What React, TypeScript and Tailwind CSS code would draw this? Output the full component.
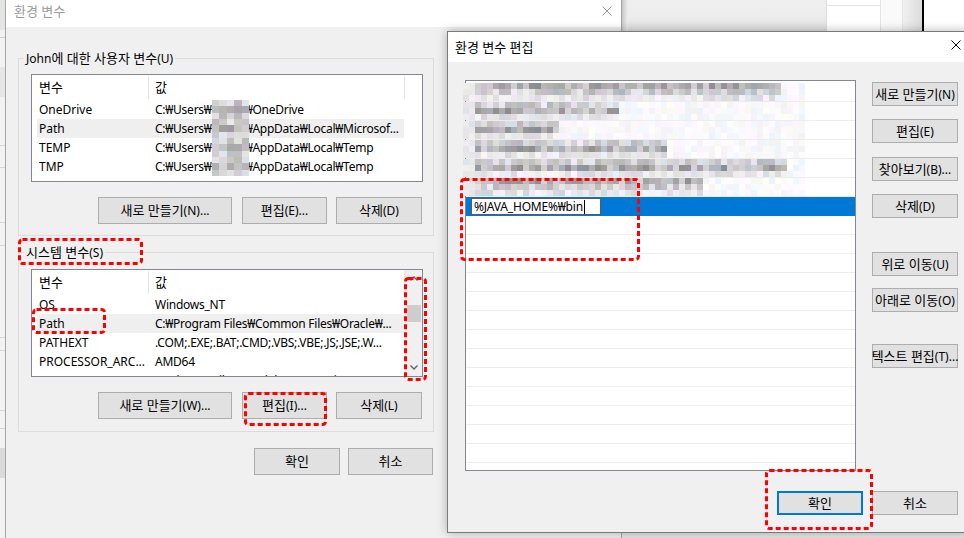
import React from "react";

function makeRng(seed: number) {
  let s = ((seed + 7) * 2654435761) >>> 0 || 1;
  return () => {
    s ^= s << 13;
    s >>>= 0;
    s ^= s >>> 17;
    s ^= s << 5;
    s >>>= 0;
    return s / 4294967296;
  };
}

const TINTS: [number, number, number][] = [
  [0, 0, 0],
  [0, 0, 0],
  [8, 0, 10],
  [-6, 0, 8],
  [5, 3, -3],
  [3, -3, 5],
];

function grayColor(r: () => number, lo: number, hi: number) {
  const v = Math.round(lo + r() * (hi - lo));
  const t = TINTS[Math.floor(r() * TINTS.length)];
  const c = (n: number) => Math.max(0, Math.min(255, v + n));
  return `rgb(${c(t[0])},${c(t[1])},${c(t[2])})`;
}

const HANGUL = /([\uAC00-\uD7A3\u3131-\u318E]+(?:\s+[\uAC00-\uD7A3\u3131-\u318E]+)*)/;

function Ko({ text }: { text: string }) {
  const parts = text.split(HANGUL);
  return (
    <>
      {parts.map((p, i) =>
        i % 2 === 1 ? (
          <span key={i} className="text-[13px]">
            {p}
          </span>
        ) : (
          <React.Fragment key={i}>{p}</React.Fragment>
        )
      )}
    </>
  );
}

function UserMosaic({ seed }: { seed: number }) {
  const r = makeRng(seed);
  const cols = [7, 8, 7, 8, 7];
  const rows = [6, 7, 6];
  const rects: React.ReactNode[] = [];
  let y = 0;
  rows.forEach((h, ri) => {
    let x = 0;
    cols.forEach((w, ci) => {
      rects.push(
        <rect
          key={`${ri}-${ci}`}
          x={x}
          y={y}
          width={w}
          height={h}
          fill={grayColor(r, ri === 1 ? 150 : 180, ri === 1 ? 212 : 232)}
        />
      );
      x += w;
    });
    y += h;
  });
  return (
    <svg width={37} height={19} className="inline-block align-top relative z-10" shapeRendering="crispEdges">
      {rects}
    </svg>
  );
}

function EditMosaic({ seed, textEnd, dark }: { seed: number; textEnd: number; dark: number }) {
  const r = makeRng(seed);
  const W = 342;
  const cw = 6;
  const bands = [6, 6, 6];
  const rects: React.ReactNode[] = [];
  let y = 0;
  bands.forEach((h, bi) => {
    for (let i = 0; i * cw < W; i++) {
      const x = i * cw;
      let fill: string;
      if (x < 12) {
        fill = grayColor(r, 225, 240);
      } else if (x < textEnd) {
        if (bi === dark) fill = grayColor(r, 140, 212);
        else if (bi === 2) fill = grayColor(r, 212, 246);
        else fill = grayColor(r, 180, 236);
      } else {
        fill = grayColor(r, 242, 253);
      }
      rects.push(<rect key={`${bi}-${i}`} x={x} y={y} width={cw} height={h} fill={fill} />);
    }
    y += h;
  });
  return (
    <svg width={W} height={18} className="block -ml-[3px]" shapeRendering="crispEdges">
      {rects}
    </svg>
  );
}

function CloseX({ color }: { color: string }) {
  return (
    <svg width="10" height="10" viewBox="0 0 10 10" className="shrink-0">
      <path d="M0.5 0.5L9.5 9.5M9.5 0.5L0.5 9.5" stroke={color} strokeWidth="1" />
    </svg>
  );
}

function DashBox({ className, w, h }: { className: string; w: number; h: number }) {
  return (
    <svg className={`absolute ${className}`} width={w} height={h} viewBox={`0 0 ${w} ${h}`}>
      <rect
        x={1.5}
        y={1.5}
        width={w - 3}
        height={h - 3}
        rx={3}
        fill="none"
        stroke="#ff0000"
        strokeWidth={3}
        strokeDasharray="5 3"
      />
    </svg>
  );
}

function Btn({ label, className = "" }: { label: string; className?: string }) {
  return (
    <div
      className={`flex items-center justify-center bg-[#e1e1e1] border border-[#adadad] whitespace-nowrap leading-[16px] shrink-0 ${className}`}
    >
      <span>
        <Ko text={label} />
      </span>
    </div>
  );
}

function ListHeader() {
  return (
    <div className="h-[25px] shrink-0 flex items-center">
      <div className="w-[117px] h-[23px] flex items-center pl-[7px] border-r border-[#e5e5e5] text-[13px]">변수</div>
      <div className="w-[256px] h-[23px] flex items-center pl-[6px] border-r border-[#e5e5e5] text-[13px]">값</div>
    </div>
  );
}

function VarRow({ name, children, hl = false }: { name: string; children: React.ReactNode; hl?: boolean }) {
  return (
    <div className={`h-[19px] shrink-0 ml-[5px] w-[367px] flex leading-[19px] ${hl ? "bg-[#efefef]" : ""}`}>
      <div className="w-[116px] pl-[2px] whitespace-nowrap overflow-hidden">{name}</div>
      <div className="w-[251px] pl-[2px] whitespace-nowrap overflow-hidden tracking-[-0.25px]">{children}</div>
    </div>
  );
}

function UserPath({ seed, rest }: { seed: number; rest: string }) {
  return (
    <>
      C:₩Users₩
      <UserMosaic seed={seed} />
      <span className="-ml-[4px]">{rest}</span>
    </>
  );
}

function Chevron({ down = false }: { down?: boolean }) {
  return (
    <svg width="8" height="5" viewBox="0 0 8 5">
      <path
        d={down ? "M0.5 0.5L4 4L7.5 0.5" : "M0.5 4.5L4 1L7.5 4.5"}
        stroke="#606060"
        strokeWidth="1.3"
        fill="none"
      />
    </svg>
  );
}

function Group({ label, className, children }: { label: string; className: string; children: React.ReactNode }) {
  return (
    <div className={`relative w-[416px] border border-[#dcdcdc] flex flex-col pl-[12px] shrink-0 ${className}`}>
      <span className="absolute left-[5px] -top-[9px] bg-[#f0f0f0] px-[2px] leading-[16px] whitespace-nowrap">
        <Ko text={label} />
      </span>
      {children}
    </div>
  );
}

function MainDialog() {
  return (
    <div className="absolute left-[5px] top-0 w-[617px] h-[560px] flex flex-col border-x border-[#a5a5a5] bg-[#f0f0f0]">
      <div className="h-[27px] shrink-0 bg-white flex items-center justify-between pl-[8px] pr-[9px]">
        <span className="text-[#9a9a9a] text-[13px] leading-[16px] -mt-[5px]">환경 변수</span>
        <div className="-mt-[5px] flex">
          <CloseX color="#9a9a9a" />
        </div>
      </div>
      <div className="flex flex-col pl-[12px] pt-[31px]">
        <Group label="John에 대한 사용자 변수(U)" className="h-[178px] pt-[15px]">
          <div className="w-[392px] h-[108px] border border-[#828790] bg-white flex flex-col overflow-hidden">
            <ListHeader />
            <VarRow name="OneDrive">
              <UserPath seed={1} rest="₩OneDrive" />
            </VarRow>
            <VarRow name="Path" hl>
              <UserPath seed={2} rest="₩AppData₩Local₩Microsof..." />
            </VarRow>
            <VarRow name="TEMP">
              <UserPath seed={3} rest="₩AppData₩Local₩Temp" />
            </VarRow>
            <VarRow name="TMP">
              <UserPath seed={4} rest="₩AppData₩Local₩Temp" />
            </VarRow>
          </div>
          <div className="flex mt-[15px] ml-[67px] gap-[10px]">
            <Btn label="새로 만들기(N)..." className="w-[134px] h-[27px]" />
            <Btn label="편집(E)..." className="w-[85px] h-[27px]" />
            <Btn label="삭제(D)" className="w-[86px] h-[27px] -ml-[1px]" />
          </div>
        </Group>
        <Group label="시스템 변수(S)" className="h-[180px] pt-[16px] mt-[16px]">
          <div className="w-[392px] h-[108px] border border-[#828790] bg-white flex">
            <div className="w-[373px] flex flex-col overflow-hidden">
              <ListHeader />
              <VarRow name="OS">Windows_NT</VarRow>
              <VarRow name="Path" hl>
                C:₩Program Files₩Common Files₩Oracle₩...
              </VarRow>
              <VarRow name="PATHEXT">.COM;.EXE;.BAT;.CMD;.VBS;.VBE;.JS;.JSE;.W...</VarRow>
              <VarRow name="PROCESSOR_ARC...">AMD64</VarRow>
              <VarRow name="PROCESSOR_IDE...">Intel64 Family 6 Model 158 Stepping 10, ...</VarRow>
            </div>
            <div className="w-[17px] flex flex-col bg-[#f0f0f0] border-l border-[#e8e8e8]">
              <div className="h-[17px] flex items-center justify-center">
                <Chevron />
              </div>
              <div className="flex-1 flex flex-col">
                <div className="mt-[18px] h-[17px] bg-[#cdcdcd] mx-[1px]" />
              </div>
              <div className="h-[17px] flex items-center justify-center">
                <Chevron down />
              </div>
            </div>
          </div>
          <div className="flex mt-[15px] ml-[67px] gap-[10px]">
            <Btn label="새로 만들기(W)..." className="w-[134px] h-[27px]" />
            <Btn label="편집(I)..." className="w-[85px] h-[27px]" />
            <Btn label="삭제(L)" className="w-[86px] h-[27px] -ml-[1px]" />
          </div>
        </Group>
        <div className="flex mt-[16px] ml-[236px] gap-[8px]">
          <Btn label="확인" className="w-[86px] h-[27px]" />
          <Btn label="취소" className="w-[85px] h-[27px]" />
        </div>
      </div>
    </div>
  );
}

const EDIT_ROWS = [
  { end: 317, dark: 0 },
  { end: 155, dark: 1 },
  { end: 95, dark: 1 },
  { end: 204, dark: 1 },
  { end: 324, dark: 1 },
  { end: 240, dark: 0 },
];

function EditDialog() {
  const rows = Array.from({ length: 20 }, (_, i) => i);
  return (
    <div className="absolute left-[447px] top-[31px] w-[522px] h-[502px] flex flex-col border border-[#7a7a7a] bg-[#f0f0f0] shadow-[0_0_10px_rgba(0,0,0,0.28)]">
      <div className="h-[30px] shrink-0 bg-white flex items-center justify-between pl-[7px] pr-[7px]">
        <span className="leading-[16px] text-[13px]">환경 변수 편집</span>
        <div className="-mt-[4px] flex">
          <CloseX color="#000000" />
        </div>
      </div>
      <div className="flex pt-[18px] pl-[17px]">
        <div className="w-[391px] h-[391px] shrink-0 border border-[#828790] bg-white flex flex-col pt-[2px]">
          {rows.map((i) =>
            i < 6 ? (
              <div key={i} className="h-[19px] shrink-0 border-b border-[#ededed]">
                <EditMosaic seed={i * 31 + 5} textEnd={EDIT_ROWS[i].end} dark={EDIT_ROWS[i].dark} />
              </div>
            ) : i === 6 ? (
              <div key={i} className="h-[19px] shrink-0 bg-[#0078d7] flex items-start">
                <div className="ml-[5px] mt-[1px] h-[17px] w-[130px] bg-white border border-[#5a5a5a] flex items-center pl-[2px] leading-[15px] whitespace-nowrap tracking-[-0.2px]">
                  <span>%JAVA_HOME%₩bin</span>
                  <span className="ml-[1px] w-[1px] h-[14px] bg-black" />
                </div>
              </div>
            ) : (
              <div key={i} className="h-[19px] shrink-0 border-b border-[#ededed]" />
            )
          )}
        </div>
        <div className="w-[86px] ml-[16px] pt-[2px] flex flex-col">
          <Btn label="새로 만들기(N)" className="w-[86px] h-[24px]" />
          <Btn label="편집(E)" className="w-[86px] h-[24px] mt-[13px]" />
          <Btn label="찾아보기(B)..." className="w-[86px] h-[24px] mt-[14px]" />
          <Btn label="삭제(D)" className="w-[86px] h-[24px] mt-[13px]" />
          <Btn label="위로 이동(U)" className="w-[86px] h-[24px] mt-[34px]" />
          <Btn label="아래로 이동(O)" className="w-[86px] h-[24px] mt-[12px]" />
          <Btn label="텍스트 편집(T)..." className="w-[86px] h-[24px] mt-[32px]" />
        </div>
      </div>
      <div className="flex mt-[20px] ml-[329px] gap-[9px]">
        <div className="w-[86px] h-[24px] flex items-center justify-center bg-[#e1e1e1] border-2 border-[#0078d7] leading-[16px] text-[13px]">
          확인
        </div>
        <Btn label="취소" className="w-[86px] h-[24px]" />
      </div>
    </div>
  );
}

function BackgroundLeft() {
  return (
    <div className="absolute left-0 top-0 w-[5px] h-[538px] flex flex-col bg-[#f2f2f2]">
      <div className="h-[30px] bg-[#e4e4e4]" />
      <div className="h-[7px]" />
      <div className="h-[1px] bg-[#cfcfcf]" />
      <div className="h-[29px]" />
      <div className="h-[30px] bg-[#e6e6e6]" />
      <div className="h-[48px]" />
      <div className="h-[1px] bg-[#d6d6d6]" />
      <div className="h-[21px]" />
      <div className="h-[1px] bg-[#d6d6d6]" />
      <div className="h-[54px]" />
      <div className="h-[1px] bg-[#d6d6d6]" />
      <div className="h-[22px]" />
      <div className="h-[1px] bg-[#d6d6d6]" />
      <div className="h-[91px]" />
      <div className="h-[1px] bg-[#d6d6d6]" />
      <div className="h-[12px]" />
      <div className="h-[1px] bg-[#d6d6d6]" />
      <div className="h-[59px]" />
      <div className="h-[1px] bg-[#d6d6d6]" />
      <div className="h-[17px]" />
      <div className="h-[1px] bg-[#d6d6d6]" />
      <div className="h-[19px]" />
      <div className="h-[30px] bg-[#dadada]" />
    </div>
  );
}

function BackgroundTopRight() {
  return (
    <div className="absolute left-[622px] top-0 w-[342px] h-[32px] flex bg-[#eeeeee]">
      <div className="w-[6px] h-full bg-gradient-to-r from-[#c8c8c8] to-[#eeeeee]" />
      <div className="w-[198px] h-full bg-gradient-to-b from-[#efefef] via-[#ededed] to-[#dedede]" />
      <div className="w-[54px] h-full bg-white border-l border-[#dddddd] flex flex-col">
        <div className="mt-[5px] h-[1px] bg-[#e2e2e2]" />
      </div>
      <div className="w-[23px] h-full bg-[#fafafa] border-x border-[#e6e6e6]" />
      <div className="w-[19px] h-full bg-gradient-to-r from-[#f0f0f0] to-[#dcdcdc]" />
      <div className="w-[2px] h-full bg-black" />
      <div className="flex-1 h-full bg-white" />
    </div>
  );
}

export default function App() {
  return (
    <div className="relative w-[964px] h-[538px] overflow-hidden bg-[#e6e6e6] font-['Noto_Sans','Noto_Sans_CJK_KR',sans-serif] text-[12px] text-black">
      <BackgroundLeft />
      <BackgroundTopRight />
      <MainDialog />
      <EditDialog />
      <DashBox className="left-[18px] top-[238px]" w={125} h={27} />
      <DashBox className="left-[32px] top-[308px]" w={74} h={26} />
      <DashBox className="left-[404px] top-[277px]" w={23} h={104} />
      <DashBox className="left-[244px] top-[392px]" w={83} h={34} />
      <DashBox className="left-[460px] top-[178px]" w={180} h={83} />
      <DashBox className="left-[765px] top-[469px]" w={108} h={61} />
    </div>
  );
}
